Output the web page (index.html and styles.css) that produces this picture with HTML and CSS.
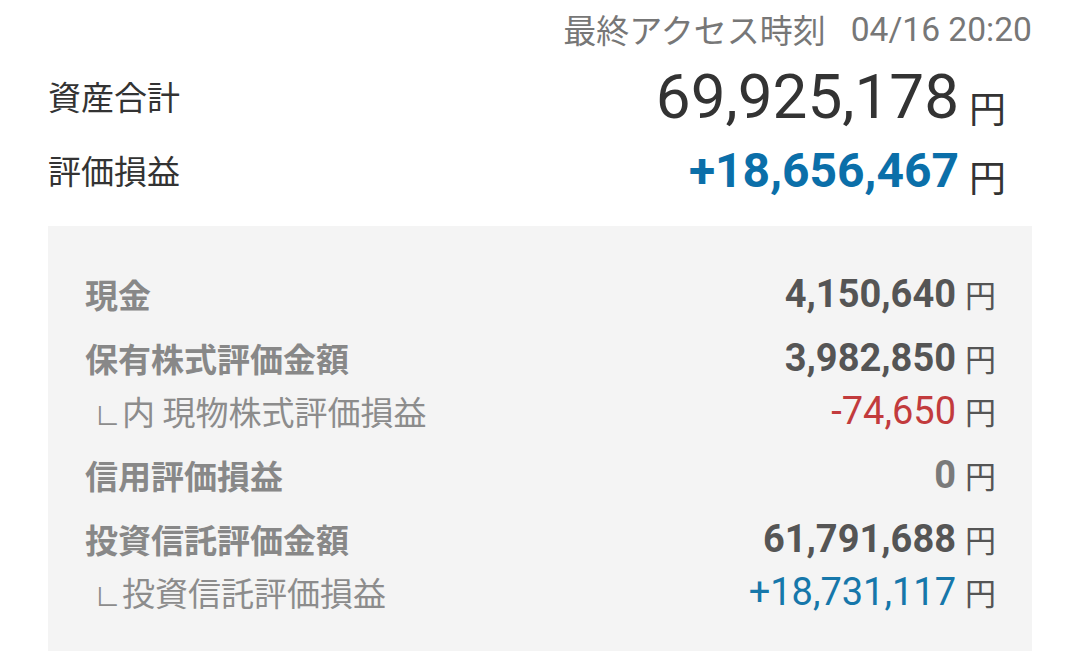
FILE: index.html
```html
<!DOCTYPE html>
<html lang="ja">
<head>
<meta charset="utf-8">
<link rel="stylesheet" href="styles.css">
</head>
<body>
<div class="page">
  <div class="access">
    <span class="access-label">最終アクセス時刻</span>
    <span class="access-time">04/16 20:20</span>
  </div>
  <div class="summary-row">
    <span class="summary-label">資産合計</span>
    <span class="summary-amount"><span class="total">69,925,178</span><span class="yen-lg">円</span></span>
  </div>
  <div class="summary-row">
    <span class="summary-label">評価損益</span>
    <span class="summary-amount"><span class="profit">+18,656,467</span><span class="yen-lg">円</span></span>
  </div>
  <div class="box">
    <div class="group">
      <div class="row">
        <span class="label">現金</span>
        <span class="value"><span class="num">4,150,640</span><span class="yen">円</span></span>
      </div>
    </div>
    <div class="group">
      <div class="row">
        <span class="label">保有株式評価金額</span>
        <span class="value"><span class="num">3,982,850</span><span class="yen">円</span></span>
      </div>
      <div class="row">
        <span class="label sub"><span class="corner">∟</span>内 現物株式評価損益</span>
        <span class="value"><span class="num minus">-74,650</span><span class="yen">円</span></span>
      </div>
    </div>
    <div class="group">
      <div class="row">
        <span class="label">信用評価損益</span>
        <span class="value"><span class="num zero">0</span><span class="yen">円</span></span>
      </div>
    </div>
    <div class="group">
      <div class="row">
        <span class="label">投資信託評価金額</span>
        <span class="value"><span class="num">61,791,688</span><span class="yen">円</span></span>
      </div>
      <div class="row">
        <span class="label sub"><span class="corner">∟</span>投資信託評価損益</span>
        <span class="value"><span class="num plus">+18,731,117</span><span class="yen">円</span></span>
      </div>
    </div>
  </div>
</div>
</body>
</html>
```

FILE: styles.css
```css
html, body {
  margin: 0;
  padding: 0;
  background: #ffffff;
}

body {
  font-family: Roboto, "Noto Sans CJK JP", sans-serif;
  color: #333333;
}

.page {
  padding: 0 48px;
}

.access {
  height: 60px;
  display: flex;
  justify-content: flex-end;
  align-items: center;
  gap: 25px;
  color: #777777;
  font-size: 33px;
  line-height: 1.2;
}

.access-label {
  font-family: "Noto Sans CJK JP", sans-serif;
}

.access-time {
  font-family: Roboto, sans-serif;
  font-size: 33.6px;
}

.summary-row {
  height: 74px;
  display: flex;
  justify-content: space-between;
  align-items: center;
  padding-right: 26px;
}

.summary-label {
  font-family: "Noto Sans CJK JP", sans-serif;
  font-size: 33px;
  line-height: 1.2;
  color: #333333;
}

.summary-amount {
  display: flex;
  align-items: baseline;
  gap: 10px;
  line-height: 1.2;
}

.total {
  font-size: 62px;
  font-weight: 400;
  color: #333333;
}

.profit {
  font-size: 48px;
  font-weight: 700;
  color: #0b6fa9;
}

.yen-lg {
  font-family: "Noto Sans CJK JP", sans-serif;
  font-size: 37px;
  color: #333333;
  position: relative;
  top: 5px;
}

.box {
  margin-top: 18px;
  background: #f4f4f4;
  padding: 42px 36px 32px 37px;
  display: flex;
  flex-direction: column;
  gap: 11px;
}

.row {
  height: 53px;
  display: flex;
  justify-content: space-between;
  align-items: center;
}

.label {
  font-family: "Noto Sans CJK JP", sans-serif;
  font-size: 33px;
  font-weight: 700;
  color: #888888;
  line-height: 1.2;
  white-space: nowrap;
}

.label.sub {
  font-weight: 400;
  padding-left: 10px;
  color: #8c8c8c;
}

.corner {
  display: inline-block;
  width: 27px;
  font-size: 25px;
  overflow: visible;
}

.value {
  display: flex;
  align-items: baseline;
  gap: 9px;
  line-height: 1.2;
}

.num {
  font-size: 38px;
  font-weight: 700;
  color: #555555;
}

.num.zero {
  color: #7a7a7a;
}

.num.minus {
  font-weight: 400;
  color: #c23b3d;
}

.num.plus {
  font-weight: 400;
  color: #1677aa;
}

.yen {
  font-family: "Noto Sans CJK JP", sans-serif;
  font-size: 31px;
  color: #555555;
}
```
